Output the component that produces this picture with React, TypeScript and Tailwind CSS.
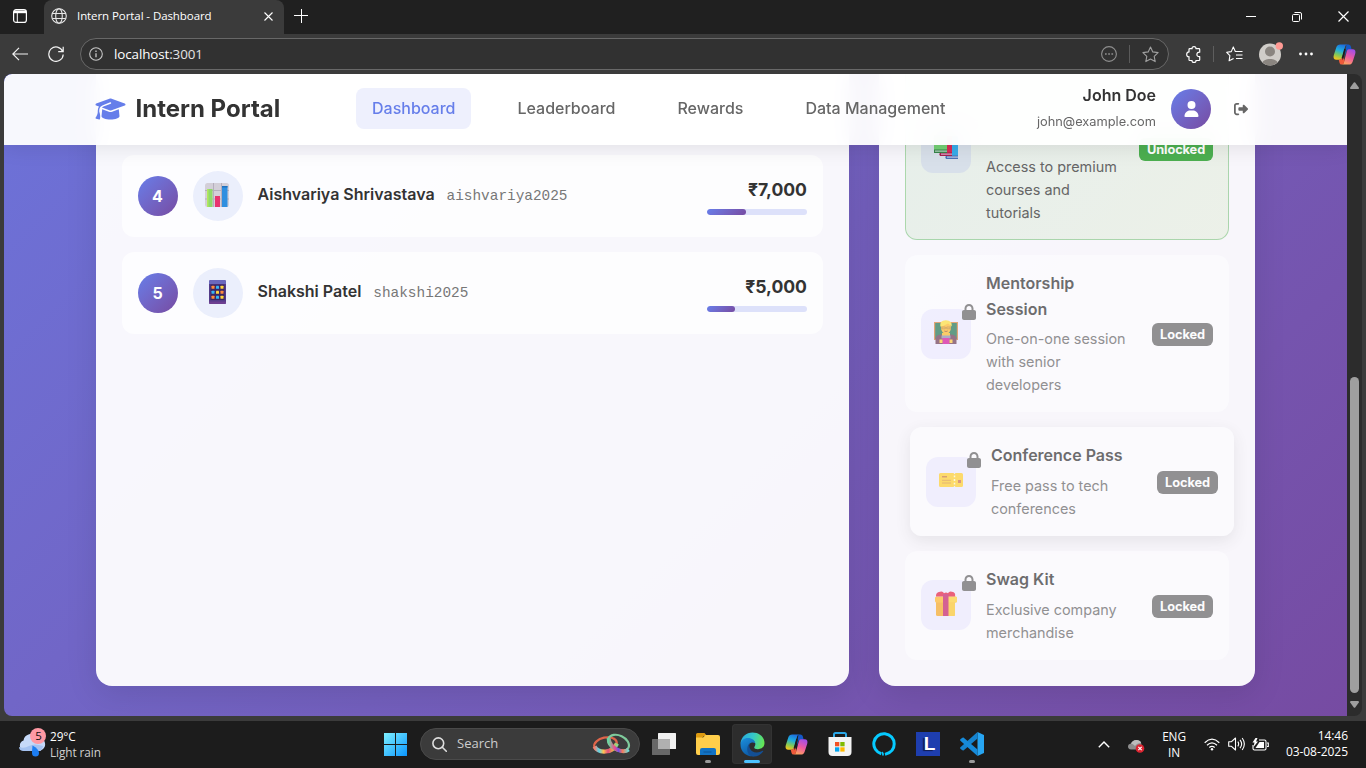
import React from 'react';
import { FaGraduationCap, FaLock, FaUser, FaRightFromBracket } from 'react-icons/fa6';

const ui = "font-['Open_Sans','Noto_Sans',sans-serif]";

function CopilotIcon({ id, size }: { id: string; size: number }) {
  return (
    <svg width={size} height={size} viewBox="0 0 24 24">
      <defs>
        <linearGradient id={`${id}a`} x1="0.6" y1="0" x2="0.3" y2="1">
          <stop offset="0" stopColor="#1d6fe0" />
          <stop offset="0.4" stopColor="#20b0dd" />
          <stop offset="0.7" stopColor="#7fc95a" />
          <stop offset="1" stopColor="#f5c61c" />
        </linearGradient>
        <linearGradient id={`${id}b`} x1="0.7" y1="0" x2="0.3" y2="1">
          <stop offset="0" stopColor="#a24ee8" />
          <stop offset="0.5" stopColor="#ee5aa0" />
          <stop offset="1" stopColor="#ffa45c" />
        </linearGradient>
      </defs>
      <path d="M14 1.500h2c1.600 0 2.300 1 2.700 2.400L19.500 7h-3c-1.500 0-2.300.8-2.800 2.300l-1.500 5" fill="#1458c8" />
      <path d="M7.500 1.500H15c-1.300 0-2 1-2.400 2.300L9.800 14.500c-.5 1.800-1.300 3-3.300 3H3.600C1 17.500 0 15.500.8 12.800L3.500 4.500C4.200 2.500 5.500 1.500 7.500 1.500z" fill={`url(#${id}a)`} />
      <path d="M16.500 6.500h3.900c2.600 0 3.600 2 2.800 4.700l-2.700 8.300c-.7 2-2 3-4 3H9c1.300 0 2-1 2.400-2.300l2.800-10.700c.4-1.700 1-3 2.300-3z" fill={`url(#${id}b)`} />
      <path d="M6 17.500c1.800 0 2.700-.8 3.300-2.700l1.200-.3 1.500 3.500-1 3.700c-.4.600-1 .8-2 .8-1.400 0-2-1-2.300-2.200z" fill="#ef5a3a" />
      <path d="M13.200 6.800l-3 11.200-.9-3.200 2.500-9z" fill="#1c1c1c" />
    </svg>
  );
}

function TitleBar() {
  return (
    <div className="flex h-[34px] shrink-0 bg-[#202020] text-white">
      <div className="flex w-[44px] items-center pb-[2px] justify-center pr-1">
        <svg width="14" height="14" viewBox="0 0 14 14" fill="none" stroke="#fff">
          <rect x="0.600" y="0.600" width="12.800" height="12.800" rx="2.500" strokeWidth="1.200" />
          <path d="M1 1.500h12v2.700H1z" fill="#fff" stroke="none" />
          <path d="M4.300 4v9" />
        </svg>
      </div>
      <div className="flex w-[240px] items-center rounded-t-lg bg-[#3b3b3b] pb-[2px] pl-[7px] pr-[11px]">
        <svg width="16" height="16" viewBox="0 0 16 16" fill="none" stroke="#e8e8e8" strokeWidth="1.100">
          <circle cx="8" cy="8" r="7.300" />
          <ellipse cx="8" cy="8" rx="3.300" ry="7.300" />
          <path d="M1.300 5.500h13.400M1.300 10.500h13.400" />
        </svg>
        <span className="ml-[10px] flex-1 text-[11.500px] leading-4 tracking-[-0.080px]">Intern Portal - Dashboard</span>
        <svg width="9" height="9" viewBox="0 0 9 9" stroke="#fff" strokeWidth="1.100"><path d="M.5.500l8 8M8.500.5l-8 8" /></svg>
      </div>
      <div className="flex flex-1 items-center justify-between pb-[2px] pl-[10px] pr-[17px]">
        <svg width="14" height="14" viewBox="0 0 14 14" stroke="#fff"><path d="M0 6.500h14M7.500 0v14" /></svg>
        <div className="flex items-center gap-[36px] pt-px">
          <svg width="10" height="10" viewBox="0 0 10 10" stroke="#fff"><path d="M0 4.500h10" /></svg>
          <svg width="10" height="10" viewBox="0 0 10 10" fill="none" stroke="#fff">
            <rect x="0.500" y="2.500" width="7" height="7" rx="1" />
            <path d="M2.500.5H8A1.500 1.500 0 0 1 9.500 2v5.500" />
          </svg>
          <svg width="11" height="11" viewBox="0 0 11 11" stroke="#fff" strokeWidth="1.200"><path d="M.5.500l10 10M10.500.5l-10 10" /></svg>
        </div>
      </div>
    </div>
  );
}

function Toolbar() {
  return (
    <div className="flex h-10 shrink-0 items-center bg-[#3b3b3b] pl-3 pr-[10px]">
      <svg width="16" height="14" viewBox="0 0 16 14" fill="none" stroke="#f2f2f2" strokeWidth="1.200"><path d="M7 .8L.8 7 7 13.200M1 7h15" /></svg>
      <svg className="ml-5" width="16" height="16" viewBox="0 0 16 16" fill="none" stroke="#f2f2f2" strokeWidth="1.200">
        <path d="M14.700 5.500A7.200 7.200 0 1 0 15.200 8.500M15.200 0.800v4.900h-5" />
      </svg>
      <div className="ml-4 flex h-8 w-[1089px] shrink-0 items-center rounded-full border border-[#686868] bg-[#313131] pl-2 pr-[9px]">
        <svg width="14" height="14" viewBox="0 0 14 14" fill="none" stroke="#c8c8c8" strokeWidth="1.100">
          <circle cx="7" cy="7" r="6.300" />
          <path d="M7 6.200v4M7 3.600v1.300" strokeWidth="1.300" />
        </svg>
        <span className="ml-[11px] flex-1 text-[13.400px] leading-5 tracking-[-0.1px] text-[#e4e4e4]"><span className="text-white">localhost</span>:3001</span>
        <svg width="16" height="16" viewBox="0 0 16 16" fill="none" stroke="#8f8f8f" strokeWidth="1.100">
          <circle cx="8" cy="8" r="7.400" />
          <path d="M4 8h1.700M7.200 8h1.700M10.400 8h1.700" strokeWidth="1.700" />
        </svg>
        <div className="mx-3 h-[18px] w-px bg-[#5a5a5a]" />
        <svg width="17" height="17" viewBox="0 0 17 17" fill="none" stroke="#a0a0a0" strokeWidth="1.100" strokeLinejoin="round">
          <path d="M8.500 1l2.300 4.900 5.300.7-3.900 3.700 1 5.300-4.700-2.600-4.700 2.600 1-5.300L.9 6.600l5.300-.7z" />
        </svg>
      </div>
      <svg className="ml-[17px] shrink-0" width="16" height="17" viewBox="0 0 16 17" fill="none" stroke="#fff" strokeWidth="1.200" strokeLinejoin="round">
        <path d="M3.800 2.700h2.300C5.800 1.300 6.700.7 8 .7s2.200.6 1.900 2h3c.6 0 .8.300.8.800v2.700c-1.900-.3-2.800.9-2.800 2.200s.9 2.500 2.800 2.200v3.100c0 .5-.3.800-.8.800h-3c.3 1.300-.6 1.900-1.900 1.900s-2.200-.6-1.900-1.900H3.800c-.5 0-.8-.3-.8-.8v-3C1.500 11 .7 9.900.7 8.500S1.500 6 3 5.900V3.500c0-.5.300-.8.800-.8z" />
      </svg>
      <div className="ml-[11px] h-4 w-px shrink-0 bg-[#5e5e5e]" />
      <svg className="ml-3 shrink-0" width="17" height="16" viewBox="0 0 17 16" fill="none" stroke="#fff" strokeWidth="1.100" strokeLinejoin="round">
        <path d="M9.300 5.500L7.300.9 5.300 5.600.7 6.300l3.200 3.300-.8 5.200 4.500-2.400M9 5.500h7.500M10 9h6.500M10 12.500h6.500" />
      </svg>
      <svg className="ml-4 shrink-0" width="24" height="24" viewBox="0 0 24 24">
        <circle cx="11" cy="12.500" r="11" fill="#d0cdc9" />
        <circle cx="11" cy="9.500" r="5" fill="#8a8580" />
        <path d="M3.500 20.500c1-4.800 14-4.800 15 0a11 11 0 0 1-15 0z" fill="#8a8580" />
        <circle cx="20.300" cy="4" r="3.700" fill="#ff9a94" />
      </svg>
      <svg className="ml-[16px] shrink-0" width="14" height="4" viewBox="0 0 14 4" fill="#fff"><circle cx="1.500" cy="2" r="1.400" /><circle cx="7" cy="2" r="1.400" /><circle cx="12.500" cy="2" r="1.400" /></svg>
      <div className="ml-auto shrink-0"><CopilotIcon id="tb" size={23} /></div>
    </div>
  );
}

function Header() {
  return (
    <header className="z-10 flex h-[71px] items-center self-start bg-white/95 pb-[2px] pl-[91px] shadow-[0_2px_20px_rgba(0,0,0,0.1)] backdrop-blur-[10px] [grid-area:1/1]">
      <FaGraduationCap className="h-6 w-[31px] shrink-0 text-[#667eea]" />
      <div className="ml-[9.500px] w-[220.500px] text-2xl leading-none font-bold text-[#333]">
        <span className="inline-block">Intern Portal</span>
      </div>
      <nav className="flex shrink-0 gap-[30px] text-base leading-[25.600px] font-medium text-[#666]">
        <a className="rounded-lg bg-[#eef0fd] px-4 py-2 text-[#667eea]">Dashboard</a>
        <a className="px-4 py-2">Leaderboard</a>
        <a className="px-4 py-2">Rewards</a>
        <a className="px-4 py-2">Data Management</a>
      </nav>
      <div className="ml-auto mr-[99px] flex items-center">
        <div className="pt-px text-right">
          <div className="text-base leading-[26px] font-semibold text-[#333]">John Doe</div>
          <div className="text-[12.800px] leading-[28px] text-[#666]">john@example.com</div>
        </div>
        <div className="ml-[15px] flex size-10 items-center justify-center rounded-full bg-linear-135 from-[#667eea] to-[#764ba2] text-white">
          <FaUser className="h-4 w-[15px]" />
        </div>
        <FaRightFromBracket className="ml-[23px] size-[14px] text-[#666]" />
      </div>
    </header>
  );
}

function ChartEmoji() {
  return (
    <svg width="24" height="24" viewBox="0 0 24 24">
      <rect width="24" height="24" rx="2.500" fill="#d3cfd8" />
      <path d="M8.500 0v24M16.500 0v24M0 7.500h24M0 16h24" stroke="#b5afbd" strokeWidth="1" />
      <rect x="2" y="6" width="5.500" height="18" fill="#8fd96b" /><rect x="2" y="6" width="1.500" height="18" fill="#b4e85e" />
      <rect x="10" y="13" width="5" height="11" fill="#e8346f" />
      <rect x="17" y="3" width="5.500" height="21" fill="#2f8fe0" /><rect x="17" y="3" width="5.500" height="1.500" fill="#2070bd" />
    </svg>
  );
}

function PhoneEmoji() {
  const colors = ['#ff8a3c', '#35b5f5', '#ffd53d', '#35b5f5', '#ffd53d', '#ff8a3c', '#ff8a3c', '#35b5f5', '#ffd53d'];
  return (
    <svg width="17" height="24" viewBox="0 0 17 24">
      <rect width="17" height="24" rx="1.500" fill="#533b88" />
      <path d="M0 1.500Q0 0 1.500 0h14Q17 0 17 1.500V4H0z" fill="#6a68bd" />
      <rect x="1.500" y="4.500" width="14" height="15.500" fill="#3c2663" />
      <path d="M0 21.500h17v1q0 1.500-1.500 1.500h-14Q0 24 0 22.500z" fill="#6d3f91" />
      {colors.map((c, i) => <rect key={i} x={2.5 + (i % 3) * 4.5} y={5.8 + Math.floor(i / 3) * 5} width="3" height="3" rx="0.400" fill={c} />)}
    </svg>
  );
}

function BooksEmoji() {
  return (
    <svg width="24" height="24" viewBox="0 0 24 24">
      <path d="M12 1h12v22H12z" fill="#38acea" /><path d="M12 20.500h12V24H12q-1.500-1.700 0-3.500z" fill="#4a72b8" /><path d="M13 21.500h11v1.300H13z" fill="#b9c5e6" />
      <path d="M6 1h12v19H6z" fill="#d92a55" /><path d="M6 17.500h12V21H6q-1.500-1.700 0-3.500z" fill="#a52050" /><path d="M7 18.500h11v1.300H7z" fill="#dda6c5" />
      <path d="M0 0h13v17H0z" fill="#74d174" /><path d="M0 14.500h13V18H0z" fill="#38854a" /><path d="M1 15.500h12v1.200H1z" fill="#b2d4bc" />
    </svg>
  );
}

function TeacherEmoji() {
  return (
    <svg width="24" height="24" viewBox="0 0 24 24">
      <rect x="0" y="2" width="24" height="18" fill="#d9843f" /><rect x="1.200" y="3" width="21.600" height="16" fill="#247653" />
      <path d="M1.500 24v-5q0-4 5-4.500h11q5 .5 5 4.500v5z" fill="#6e3d55" />
      <path d="M8 13h8v4H8z" fill="#f8bc28" />
      <ellipse cx="12" cy="7.500" rx="5" ry="6.500" fill="#ffb92c" /><path d="M6.300 6.500Q5.500 0 12 .2T17.700 6.500Q15.500 4.500 14 3.500 10 6 6.300 6.500z" fill="#ffdf3c" />
      <path d="M7.800 7h3.500v1.800H7.800zM12.700 7h3.500v1.800h-3.500z" fill="none" stroke="#a5702c" strokeWidth="0.600" />
      <path d="M10.300 11q1.700 1 3.400 0" stroke="#8a452c" fill="none" strokeWidth="0.800" />
      <path d="M7.500 15.500h9v3h-9z" fill="#8c8eb0" /><path d="M8.500 18h7v6h-7z" fill="#d4169a" /><path d="M5.500 19.500h3V23h-3zM15.500 19.500h3V23h-3z" fill="#ffc93f" />
    </svg>
  );
}

function TicketEmoji() {
  return (
    <svg width="24" height="14" viewBox="0 0 24 14">
      <path d="M1.500 0h13l1 1.200L16.500 0h6Q24 0 24 1.500v11q0 1.500-1.500 1.500h-6l-1-1.200-1 1.200h-13Q0 14 0 12.500v-11Q0 0 1.500 0z" fill="#ffcf31" />
      <path d="M3 3.800h5" stroke="#b8603c" strokeWidth="1.100" />
      <path d="M3 7.300h9M3 10h9" stroke="#dd9a3c" strokeWidth="1" />
      <path d="M15.500 2.500v9.500" stroke="#fff6d0" strokeWidth="1.500" strokeDasharray="1.800 1.800" />
      <rect x="19" y="7" width="3" height="3" fill="#cc704b" />
    </svg>
  );
}

function GiftEmoji() {
  return (
    <svg width="24" height="26" viewBox="0 0 24 26">
      <rect x="2" y="9" width="19" height="16" rx="1.500" fill="#f6a928" /><rect x="13" y="9" width="8" height="16" rx="1.500" fill="#fcc82f" />
      <rect x="1" y="5.500" width="22" height="6" rx="1.500" fill="#ffb62e" /><rect x="13" y="5.500" width="10" height="6" rx="1.500" fill="#ffd037" />
      <path d="M2 5.500Q1.500 1.500 6 .8q3-.8 4 1.500 2-1.500 4 0 1-2.300 4-1.500 4 .7 3 4.700z" fill="#e52345" />
      <rect x="9" y="3" width="5.500" height="22" fill="#c62368" />
    </svg>
  );
}

type RowProps = { rank: number; emoji: React.ReactNode; name: string; code: string; amount: string; percent: number };

function LeaderRow({ rank, emoji, name, code, amount, percent }: RowProps) {
  return (
    <div className="flex h-[82px] items-center gap-[15px] rounded-xl bg-white/70 p-4">
      <div className="flex size-10 items-center justify-center rounded-full bg-linear-135 from-[#667eea] to-[#764ba2] pr-px text-base font-bold text-white">{rank}</div>
      <div className="flex size-[50px] items-center justify-center rounded-full bg-[#ebeffc] pr-[2px] pb-[3px]">{emoji}</div>
      <div className="-ml-[0.500px] flex flex-1 items-baseline pb-[3px]">
        <span className="text-base font-semibold text-[#333]">{name}</span>
        <span className="ml-3 font-['Liberation_Mono',monospace] text-[14.400px] text-[#777]">{code}</span>
      </div>
      <div className="w-[100px] pb-[2px]">
        <div className="text-right text-[17.600px] leading-[28px] font-bold text-[#333]">{amount}</div>
        <div className="mt-[5px] h-[6px] overflow-hidden rounded-[3px] bg-[#dde1fa]">
          <div className="h-full rounded-[3px] bg-linear-135 from-[#667eea] to-[#764ba2]" style={{ width: `${percent}%` }} />
        </div>
      </div>
    </div>
  );
}

type RewardProps = { title: string[]; lines: string[]; emoji: React.ReactNode; hovered?: boolean };

function LockedReward({ title, lines, emoji, hovered }: RewardProps) {
  return (
    <div className={`flex items-center rounded-xl bg-[#fdfdff]/90 p-4 opacity-70 ${hovered ? 'translate-x-[5px] shadow-[0_5px_15px_rgba(0,0,0,0.1)]' : ''}`}>
      <div className="relative flex size-[50px] shrink-0 items-center justify-center rounded-xl bg-[#edecff] pb-[3px]">
        {emoji}
        <FaLock className="absolute -top-[5px] -right-[5px] h-4 w-[14px] text-[#666]" />
      </div>
      <div className="ml-[15px] flex-1 whitespace-nowrap">
        <div className="mb-[5px] text-base leading-[25.600px] font-semibold text-[#333]">{title.map((t) => <div key={t}>{t}</div>)}</div>
        <div className="text-[14.400px] leading-[23.040px] text-[#666]">{lines.map((l) => <div key={l}>{l}</div>)}</div>
      </div>
      <div className="mt-[2px] flex h-[23px] w-[61px] items-center justify-center rounded-md bg-[#666] text-[12.800px] font-bold tracking-[-0.1px] text-white">Locked</div>
    </div>
  );
}

const card = 'rounded-2xl bg-white/95 px-[26px] shadow-[0_8px_32px_rgba(0,0,0,0.1)]';

function Page() {
  return (
    <div className="grid min-w-0 flex-1 grid-rows-[642px] overflow-hidden rounded-l-lg bg-linear-135 from-[#667eea] to-[#764ba2] bg-[length:100%_1242px] bg-bottom font-[Inter,sans-serif]">
      <Header />
      <main className="flex min-h-0 flex-col justify-end overflow-hidden px-[92px] pb-[30px] [grid-area:1/1]">
        <div className="grid shrink-0 grid-cols-[753px_376px] gap-[30px]">
          <section className={`${card} flex flex-col gap-[15px] pt-[124px]`}>
            <LeaderRow rank={4} emoji={<ChartEmoji />} name="Aishvariya Shrivastava" code="aishvariya2025" amount="₹7,000" percent={39} />
            <LeaderRow rank={5} emoji={<PhoneEmoji />} name="Shakshi Patel" code="shakshi2025" amount="₹5,000" percent={28} />
          </section>
          <section className={`${card} flex flex-col gap-[15px] pt-[25.600px] pb-[26.400px]`}>
            <div className="flex h-[183px] items-center rounded-xl border border-[#4caf50]/40 bg-linear-135 from-[#4caf50]/10 to-[#8bc34a]/10 p-[15px]">
              <div className="flex size-[50px] shrink-0 items-center justify-center rounded-xl bg-[#d8e0ea] pb-[3px]"><BooksEmoji /></div>
              <div className="ml-[15px] flex-1 pt-[82px] text-[14.400px] leading-[23.040px] whitespace-nowrap text-[#666]">
                <div>Access to premium</div><div>courses and</div><div>tutorials</div>
              </div>
              <div className="mt-[2px] flex h-[23px] w-[74px] items-center justify-center rounded-md bg-[#4caf50] text-[12.800px] font-bold tracking-[-0.1px] text-white">Unlocked</div>
            </div>
            <LockedReward title={['Mentorship', 'Session']} lines={['One-on-one session', 'with senior', 'developers']} emoji={<TeacherEmoji />} />
            <LockedReward title={['Conference Pass']} lines={['Free pass to tech', 'conferences']} emoji={<TicketEmoji />} hovered />
            <LockedReward title={['Swag Kit']} lines={['Exclusive company', 'merchandise']} emoji={<GiftEmoji />} />
          </section>
        </div>
      </main>
    </div>
  );
}

function Scrollbar() {
  return (
    <div className="flex w-[15px] flex-col items-center rounded-r-lg bg-[#2c2c2c]">
      <svg className="mt-2 shrink-0" width="9" height="7" viewBox="0 0 9 7"><path d="M3.800.6q.7-.8 1.400 0l3.600 5q.3 1.400-.8 1.400H1Q-.1 7 .2 5.600z" fill="#9f9f9f" /></svg>
      <div className="mt-[288px] h-[316px] w-[9px] shrink-0 rounded-full bg-[#9f9f9f]" />
      <svg className="mt-2 shrink-0" width="9" height="7" viewBox="0 0 9 7"><path d="M3.800 6.400q.7.800 1.400 0l3.600-5Q9.100 0 8 0H1Q-.1 0 .2 1.400z" fill="#9f9f9f" /></svg>
    </div>
  );
}

function Cell({ children, active, dot }: { children: React.ReactNode; active?: boolean; dot?: boolean }) {
  return (
    <div className="flex w-11 justify-center">
      <div className={`relative flex h-10 w-10 items-center justify-center rounded ${active ? 'bg-[#2d2d2d] ring-1 ring-[#333] ring-inset' : ''}`}>
        {children}
        {active && <div className="absolute bottom-[1px] h-[3px] w-4 rounded-full bg-[#4cc2ff]" />}
        {dot && <div className="absolute bottom-[1px] h-[3px] w-[6px] rounded-full bg-[#9a9a9a]" />}
      </div>
    </div>
  );
}

function Taskbar() {
  return (
    <div className="flex h-[47px] shrink-0 items-center bg-[#1c1c1c] pb-px text-white">
      <div className="flex w-[384px] items-center pl-[18px] pb-[2px]">
        <svg width="28" height="30" viewBox="0 0 28 30" className="shrink-0">
          <path d="M6 23a5.500 5.500 0 0 1-.5-10.500A7.500 7.500 0 0 1 19 9a7 7 0 0 1 4.500 13Q23 23 21 23z" fill="#c6d9f8" />
          <path d="M6 23q-5 0-5-4 5 2 10-1t14 0q-1 5-4 5z" fill="#a5c2f0" />
          <path d="M14.500 17.500q6.500 3.500 6.500 7.500a3.500 3.500 0 0 1-7 0q0-2 .5-7.500z" fill="#1c7df2" />
          <circle cx="20" cy="8" r="8" fill="#ff99a4" />
          <text x="20.500" y="12" fontSize="11.500" textAnchor="middle" fill="#111" fontFamily="Open Sans">5</text>
        </svg>
        <div className="ml-1 pt-px text-[11.800px] leading-4 tracking-[-0.080px]"><div>29°C</div><div className="text-[#cfcfcf]">Light rain</div></div>
      </div>
      <svg width="23" height="23" viewBox="0 0 23 23">
        <defs><linearGradient id="win" x1="0" y1="0" x2="23" y2="23" gradientUnits="userSpaceOnUse"><stop stopColor="#7df0ff" /><stop offset="1" stopColor="#0a96ff" /></linearGradient></defs>
        <path d="M0 0h11v11H0zM12 0h11v11H12zM0 12h11v11H0zM12 12h11v11H12z" fill="url(#win)" />
      </svg>
      <div className="ml-[13px] flex h-8 w-[220px] items-center rounded-full border border-[#4a4a4a] bg-[#3b3b3b] pl-[11px] pr-2">
        <svg width="15" height="15" viewBox="0 0 15 15" fill="none" stroke="#dedede" strokeWidth="1.600" strokeLinecap="round"><circle cx="6.300" cy="6.300" r="5.400" /><path d="M10.300 10.300l4 4" /></svg>
        <span className="ml-[10px] flex-1 text-[13px] text-[#cdcdcd]">Search</span>
        <svg width="39" height="22" viewBox="0 0 39 22" fill="none">
          <defs>
            <linearGradient id="r1"><stop stopColor="#f4806e" /><stop offset="0.200" stopColor="#5bd6e8" /><stop offset="0.400" stopColor="#ffc252" /><stop offset="0.600" stopColor="#e14d7c" /><stop offset="0.800" stopColor="#f0a050" /><stop offset="1" stopColor="#85dc8b" /></linearGradient>
            <linearGradient id="r2"><stop stopColor="#6bd6a1" /><stop offset="0.300" stopColor="#ed4e8c" /><stop offset="0.500" stopColor="#7750e3" /><stop offset="0.700" stopColor="#f57c5b" /><stop offset="1" stopColor="#6ae0dd" /></linearGradient>
          </defs>
          <ellipse cx="13.500" cy="11.500" rx="11.500" ry="7" transform="rotate(-12 13.500 11.500)" stroke="#e0654a" strokeWidth="2.200" />
          <path d="M2.500 13.500q3 5.500 11 5t11.500-8" stroke="url(#r1)" strokeWidth="4.200" />
          <ellipse cx="26.500" cy="10" rx="11" ry="7.500" transform="rotate(25 26.500 10)" stroke="#7fcb9c" strokeWidth="2.200" />
          <path d="M16.500 5q1 8 8.500 11.500t11.500 0" stroke="url(#r2)" strokeWidth="4" />
        </svg>
      </div>
      <div className="ml-[2px] flex">
        <Cell><svg width="24" height="22" viewBox="0 0 24 22"><rect x="6" width="18" height="16" rx="0.500" fill="#f2f2f2" /><rect y="6" width="18" height="16" rx="0.500" fill="#686868" /><path d="M6 6h12v10H6z" fill="#b0b0b0" /></svg></Cell>
        <Cell dot>
          <svg width="24" height="22" viewBox="0 0 24 22"><path d="M0 1.500Q0 0 1.500 0h7L11 3h-3L6 5H0z" fill="#dd9a10" /><path d="M0 4.500h7L9.500 2H22q2 0 2 2v16q0 2-2 2H2q-2 0-2-2z" fill="#ffce4b" /><path d="M4 22v-5q0-2 2-2h12q2 0 2 2v5z" fill="#1273c4" /><path d="M7.500 19.500v-1h8v1z" fill="#0a5599" /></svg>
        </Cell>
        <Cell active>
          <svg width="25" height="25" viewBox="0 0 25 25">
            <defs>
              <linearGradient id="eg1" x1="0" y1="0.300" x2="1" y2="0.500"><stop stopColor="#28a9df" /><stop offset="0.500" stopColor="#35c8c8" /><stop offset="1" stopColor="#66e651" /></linearGradient>
              <linearGradient id="eg2" x1="0" y1="0" x2="0.500" y2="1"><stop stopColor="#1c8fdc" /><stop offset="1" stopColor="#0c59a4" /></linearGradient>
            </defs>
            <path d="M.5 11.500C1.200 4.800 6.200.5 12.500.5c7.500 0 12 5.200 12 10.500 0 4-3 6.200-6.500 6.200-3 0-4.500-1-3.500-2.500 2-3 .5-6.200-3.500-6.500Z" fill="url(#eg1)" />
            <path d="M.5 12.500C.8 8.500 4 6 8 6c4 0 7 2.500 7.200 5.200-4-2-6.800.8-6.800 4.300 0 4.500 4 8 10.100 7C11.500 27 .5 23 .5 12.500Z" fill="url(#eg2)" />
            <path d="M10.200 10.500c-2.500 4 .5 10 6.300 10 3 0 5-1.200 6-1.700.5-.3 1 .2.600.7-2 3-5.600 5-9.600 5C7 24.500 5 15 10.200 10.500Z" fill="#134f94" />
          </svg>
        </Cell>
        <Cell><CopilotIcon id="tk" size={23} /></Cell>
        <Cell>
          <svg width="24" height="24" viewBox="0 0 24 24"><path d="M6 5V2.500Q6 1 7.500 1h9Q18 1 18 2.500V5" fill="none" stroke="#2ba8e8" strokeWidth="2" /><path d="M.5 5h23v15q0 4-4 4h-15q-4 0-4-4z" fill="#f3f3f3" /><path d="M7 10h4.300v4.300H7z" fill="#f25022" /><path d="M12.300 10h4.300v4.300h-4.300z" fill="#7fba00" /><path d="M7 15.300h4.300v4.300H7z" fill="#00a4ef" /><path d="M12.300 15.300h4.300v4.300h-4.300z" fill="#ffb900" /></svg>
        </Cell>
        <Cell><svg width="24" height="24" viewBox="0 0 24 24" fill="none" stroke="#06caff"><path d="M9.300 21.700A10.200 10.200 0 1 1 22.200 12c0 5.500-4 9-9.200 10.400" strokeWidth="3" /><path d="M10 20.200q1.300.6 1 3.300" strokeWidth="1.800" /></svg></Cell>
        <Cell><div className="flex size-6 items-center justify-center bg-[#1e3eaf] pl-[3px] font-['Liberation_Sans',sans-serif] text-[19px] font-bold [text-shadow:-2px_1px_1px_#101c50]">L</div></Cell>
        <Cell dot>
          <svg width="24" height="24" viewBox="0 0 24 24"><path d="M17.500 0L24 3v18l-6.500 3z" fill="#27a5f2" /><path d="M17.500 0v6.500L3.500 18.500l-1.200-.2L.4 16.700q-.6-.7 0-1.400z" fill="#1583cf" /><path d="M17.500 24v-6.500L3.500 5.500l-1.200.2L.4 7.300q-.6.700 0 1.400z" fill="#168bdb" /></svg>
        </Cell>
      </div>
      <div className="ml-auto flex items-center pr-[18px] leading-4">
        <svg width="12" height="7" viewBox="0 0 12 7" fill="none" stroke="#fff" strokeWidth="1.400"><path d="M.8 6.300L6 1l5.200 5.300" /></svg>
        <svg className="ml-[18px] mt-1" width="17" height="14" viewBox="0 0 17 14"><path d="M3 10.500Q0 10 0 7.500T3 4.500Q5 .5 9 1t4.500 4.500l-5 5z" fill="#8d8d8d" /><path d="M3 4.500Q5 .5 9 1t4 3q-4 0-6 3-2-2.500-4-2.500z" fill="#bcbcbc" /><circle cx="12" cy="9.500" r="4.300" fill="#dc2430" /><path d="M10.300 7.800l3.400 3.400M13.700 7.800l-3.400 3.400" stroke="#fff" strokeWidth="1.100" /></svg>
        <div className="ml-[14px] w-[30px] text-center text-[11.800px] tracking-[-0.1px]"><div>ENG</div><div>IN</div></div>
        <svg className="ml-[15px]" width="16" height="13" viewBox="0 0 16 13" fill="none" stroke="#fff" strokeWidth="1.200"><path d="M.7 4.700q7.300-7 14.600 0M3 7.200q5-4.700 10 0M5.300 9.500q2.700-2.400 5.400 0" /><circle cx="8" cy="11.300" r="1.200" fill="#fff" stroke="none" /></svg>
        <svg className="ml-2" width="17" height="14" viewBox="0 0 17 14" fill="none" stroke="#fff" strokeWidth="1.100" strokeLinejoin="round"><path d="M.7 4.700h2.800L7.500 1v12L3.500 9.300H.7zM9.800 4.700q1.700 2.300 0 4.600M12 2.800q3.300 4.200 0 8.400M14.200 1q4.300 6 0 12" /></svg>
        <svg className="ml-[7px]" width="17" height="13" viewBox="0 0 17 13" fill="none" stroke="#fff" strokeWidth="1.100"><path d="M7 2h5.500q1.500 0 1.500 1.500v7q0 1.500-1.500 1.500h-10Q1 12 1 10.500V7M15 5h1.300v3.500H15" /><path d="M7.500 4h4.500v6H3.500z" fill="#fff" stroke="none" /><path d="M3.500 0L.5 4.500h2L1.500 9l4.500-5.500H4L5.500 0z" fill="#fff" stroke="none" /></svg>
        <div className="w-[79px] text-right text-[12px] tracking-[-0.050px]"><div>14:46</div><div>03-08-2025</div></div>
      </div>
    </div>
  );
}

export default function App() {
  return (
    <div className={`flex h-[768px] w-[1366px] flex-col overflow-hidden bg-[#3b3b3b] ${ui}`}>
      <TitleBar />
      <Toolbar />
      <div className="mb-[5px] flex h-[642px] shrink-0 px-1">
        <Page />
        <Scrollbar />
      </div>
      <Taskbar />
    </div>
  );
}
